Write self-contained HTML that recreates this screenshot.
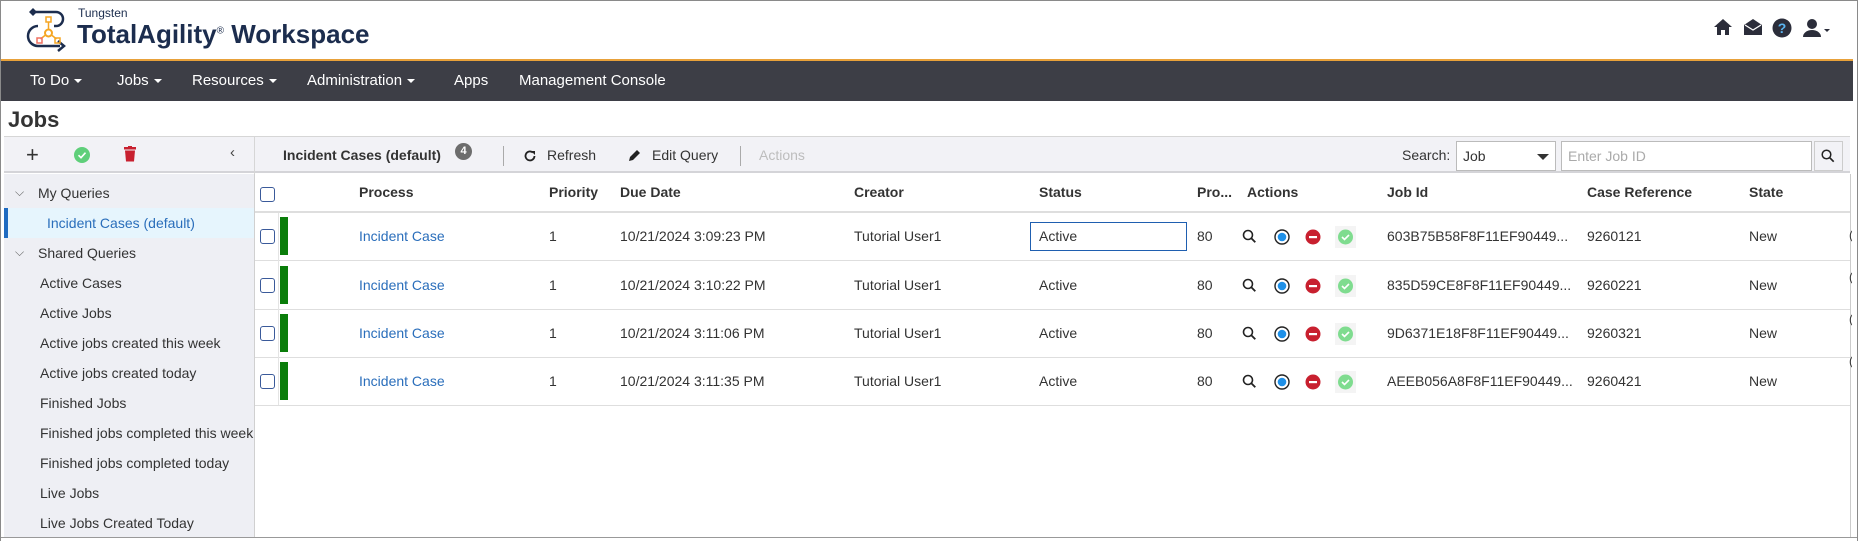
<!DOCTYPE html>
<html><head><meta charset="utf-8"><style>
*{margin:0;padding:0;box-sizing:border-box}
body{width:1858px;height:541px;overflow:hidden;background:#fff;font-family:"Liberation Sans",sans-serif;font-size:14px;color:#333;position:relative}
.a{position:absolute;white-space:nowrap}
.frame{position:absolute;left:0;top:0;width:1858px;height:541px;border:1px solid #8a8a8a;border-bottom:none;pointer-events:none}
.nav{position:absolute;left:1px;top:59px;width:1852px;height:42px;background:#3d3e46;border-top:2px solid #e8a13a}
.nav span{position:absolute;top:11px;color:#fff;font-size:15px}
.car{display:inline-block;width:0;height:0;border-left:4px solid transparent;border-right:4px solid transparent;border-top:4px solid #fff;margin-left:5px;vertical-align:middle}
.side{position:absolute;left:4px;top:174px;width:250px;height:367px;background:#eeeff4}
.tb{position:absolute;left:4px;top:136px;width:1846px;height:37px;background:#f2f2f6;border-top:1px solid #d6d6d6;border-bottom:2px solid #d4d4d8}
.si{position:absolute;left:40px;color:#333}
.hd{position:absolute;top:184px;font-weight:bold;color:#333}
.rl{position:absolute;left:255px;width:1595px;height:1px;background:#dedede}
.cb{position:absolute;left:260px;width:15px;height:15px;border:1.5px solid #3a5a9a;border-radius:3px;background:#fff}
.gb{position:absolute;left:280px;width:8px;height:38px;background:#0a7d0a}
</style></head><body>
<svg class="a" style="left:26px;top:6px" width="46" height="46" viewBox="0 0 46 46">
<path d="M8 6 H30 a7 7 0 0 1 0 14 H28" fill="none" stroke="#1c2d4e" stroke-width="2.5"/>
<path d="M3 6 l4 -4 l4 4 l-4 4z" fill="#1c2d4e"/>
<path d="M12 20 a10 10 0 0 0 0 20 H34" fill="none" stroke="#1c2d4e" stroke-width="2.5"/>
<path d="M32 35 l6 5 l-6 5" fill="none" stroke="#1c2d4e" stroke-width="2.5"/>
<rect x="20" y="11" width="5" height="5" fill="none" stroke="#f5a623" stroke-width="1.5"/>
<circle cx="22.5" cy="27" r="3.5" fill="none" stroke="#f5a623" stroke-width="2"/>
<path d="M22.5 16 v7 M19.5 29 l-5 4 M25.5 29 l5 4" stroke="#f5a623" stroke-width="1.5"/>
<rect x="11" y="32" width="5" height="5" fill="none" stroke="#f07060" stroke-width="1.5"/>
<rect x="29" y="32" width="5" height="5" fill="none" stroke="#f5a623" stroke-width="1.5"/>
</svg>
<div class="a" style="left:78px;top:6px;font-size:12px;color:#1c2d4e">Tungsten</div>
<div class="a" style="left:77px;top:19px;font-size:26px;color:#1c2d4e;font-weight:bold">TotalAgility<sup style="font-size:10px;font-weight:normal">®</sup> <span style="font-weight:600">Workspace</span></div>
<svg class="a" style="left:1713px;top:18px" width="20" height="18" viewBox="0 0 20 18"><path d="M10 1 L1 9 h3 v8 h4 v-5 h4 v5 h4 v-8 h3z" fill="#2b2d3a"/></svg>
<svg class="a" style="left:1743px;top:18px" width="20" height="18" viewBox="0 0 20 18"><path d="M1 7 L10 1 L19 7 V17 H1Z" fill="#2b2d3a"/><path d="M2 7 L10 12 L18 7" fill="none" stroke="#fff" stroke-width="1.3"/></svg>
<svg class="a" style="left:1772px;top:18px" width="20" height="20" viewBox="0 0 20 20"><circle cx="10" cy="10" r="9.5" fill="#2b2d3a"/><text x="10" y="15" font-size="14" font-weight="bold" text-anchor="middle" fill="#5ab4f0" font-family="Liberation Sans">?</text></svg>
<svg class="a" style="left:1803px;top:18px" width="28" height="20" viewBox="0 0 28 20"><circle cx="9" cy="6" r="5" fill="#2b2d3a"/><path d="M0 19 a9 7 0 0 1 18 0z" fill="#2b2d3a"/><path d="M21 11 h6 l-3 3z" fill="#2b2d3a"/></svg>
<div class="nav">
<span style="left:29px">To Do<i class="car"></i></span>
<span style="left:116px">Jobs<i class="car"></i></span>
<span style="left:191px">Resources<i class="car"></i></span>
<span style="left:306px">Administration<i class="car"></i></span>
<span style="left:453px">Apps</span>
<span style="left:518px">Management Console</span>
</div>
<div class="a" style="left:8px;top:107px;font-size:22px;font-weight:bold;color:#333">Jobs</div>
<div class="tb"></div>
<div class="a" style="left:254px;top:137px;width:1px;height:37px;background:#d6d6d6"></div>
<div class="a" style="left:26px;top:142px;font-size:22px;color:#333">+</div>
<svg class="a" style="left:74px;top:147px" width="16" height="16" viewBox="0 0 16 16"><circle cx="8" cy="8" r="8" fill="#5fcf7a"/><path d="M4.5 8.2 l2.5 2.5 l4.5 -5" fill="none" stroke="#fff" stroke-width="1.6"/></svg>
<svg class="a" style="left:124px;top:146px" width="12" height="16" viewBox="0 0 12 16"><rect x="0" y="1" width="12" height="2.5" fill="#c8202f"/><rect x="4" y="0" width="4" height="2" fill="#c8202f"/><path d="M1 4.5 h10 l-1 11 h-8z" fill="#c8202f"/></svg>
<div class="a" style="left:230px;top:144px;font-size:15px;color:#444">‹</div>
<div class="a" style="left:283px;top:147px;font-weight:bold">Incident Cases (default)</div>
<div class="a" style="left:455px;top:143px;width:17px;height:17px;border-radius:50%;background:#6d6d6d;color:#fff;font-size:11px;text-align:center;line-height:17px;font-weight:bold">4</div>
<div class="a" style="left:503px;top:146px;width:1px;height:20px;background:#aaa"></div>
<svg class="a" style="left:523px;top:149px" width="14" height="14" viewBox="0 0 14 14"><path d="M11.5 7 a4.5 4.5 0 1 1 -1.6 -3.5" fill="none" stroke="#222" stroke-width="1.8"/><path d="M8 2 h4 v4z" fill="#222"/></svg>
<div class="a" style="left:547px;top:147px">Refresh</div>
<svg class="a" style="left:627px;top:148px" width="15" height="15" viewBox="0 0 15 15"><path d="M2 13 l1 -4 l7 -7 l3 3 l-7 7z" fill="#222"/></svg>
<div class="a" style="left:652px;top:147px">Edit Query</div>
<div class="a" style="left:740px;top:146px;width:1px;height:20px;background:#aaa"></div>
<div class="a" style="left:759px;top:147px;color:#bdbdbd">Actions</div>
<div class="a" style="left:1402px;top:147px">Search:</div>
<div class="a" style="left:1456px;top:141px;width:100px;height:30px;border:1px solid #bbb;background:#fff"><span class="a" style="left:6px;top:6px">Job</span><span class="a" style="left:80px;top:12px;width:0;height:0;border-left:6px solid transparent;border-right:6px solid transparent;border-top:6px solid #333"></span></div>
<div class="a" style="left:1561px;top:141px;width:251px;height:30px;border:1px solid #bbb;background:#fff"><span class="a" style="left:6px;top:6px;color:#aaa">Enter Job ID</span></div>
<div class="a" style="left:1814px;top:141px;width:29px;height:30px;border:1px solid #ccc;background:#f2f2f6"></div>
<svg class="a" style="left:1821px;top:149px" width="14" height="14" viewBox="0 0 14 14"><circle cx="5.5" cy="5.5" r="4.3" fill="none" stroke="#222" stroke-width="1.5"/><path d="M8.7 8.7 l4 4" stroke="#222" stroke-width="1.7"/></svg>
<div class="side"></div>
<div class="a" style="left:4px;top:208px;width:250px;height:30px;background:#e6f5fd;border-left:4px solid #1f6bc1"></div>
<div class="a" style="left:15px;top:185px;font-size:12px;color:#666">⌵</div>
<div class="si" style="left:38px;top:185px">My Queries</div>
<div class="si" style="left:47px;top:215px;color:#2a6ebb">Incident Cases (default)</div>
<div class="a" style="left:15px;top:245px;font-size:12px;color:#666">⌵</div>
<div class="si" style="left:38px;top:245px">Shared Queries</div>
<div class="si" style="top:275px">Active Cases</div>
<div class="si" style="top:305px">Active Jobs</div>
<div class="si" style="top:335px">Active jobs created this week</div>
<div class="si" style="top:365px">Active jobs created today</div>
<div class="si" style="top:395px">Finished Jobs</div>
<div class="si" style="top:425px;width:214px;overflow:hidden">Finished jobs completed this week</div>
<div class="si" style="top:455px">Finished jobs completed today</div>
<div class="si" style="top:485px">Live Jobs</div>
<div class="si" style="top:515px">Live Jobs Created Today</div>
<div class="a" style="left:254px;top:174px;width:1px;height:367px;background:#d0d0d0"></div>
<div class="a" style="left:1850px;top:174px;width:1px;height:367px;background:#ccc"></div>
<div class="cb" style="top:187px"></div>
<div class="hd" style="left:359px">Process</div>
<div class="hd" style="left:549px">Priority</div>
<div class="hd" style="left:620px">Due Date</div>
<div class="hd" style="left:854px">Creator</div>
<div class="hd" style="left:1039px">Status</div>
<div class="hd" style="left:1197px">Pro...</div>
<div class="hd" style="left:1247px">Actions</div>
<div class="hd" style="left:1387px">Job Id</div>
<div class="hd" style="left:1587px">Case Reference</div>
<div class="hd" style="left:1749px">State</div>
<div class="rl" style="top:211px;height:2px"></div>
<div class="rl" style="top:260px"></div>
<div class="rl" style="top:309px"></div>
<div class="rl" style="top:357px"></div>
<div class="rl" style="top:405px"></div>
<div class="a" style="left:278px;top:213px;width:1px;height:192px;background:#e4e4e4"></div>
<div class="a" style="left:1030px;top:222px;width:157px;height:29px;border:1.5px solid #1f5fb0"></div>
<div class="cb" style="top:229px"></div><div class="gb" style="top:217px"></div>
<div class="a" style="left:359px;top:228px;color:#2a6ebb">Incident Case</div><div class="a" style="left:549px;top:228px">1</div><div class="a" style="left:620px;top:228px">10/21/2024 3:09:23 PM</div><div class="a" style="left:854px;top:228px">Tutorial User1</div><div class="a" style="left:1039px;top:228px">Active</div><div class="a" style="left:1197px;top:228px">80</div><div class="a" style="left:1387px;top:228px">603B75B58F8F11EF90449...</div><div class="a" style="left:1587px;top:228px">9260121</div><div class="a" style="left:1749px;top:228px">New</div>
<div class="cb" style="top:278px"></div><div class="gb" style="top:266px"></div>
<div class="a" style="left:359px;top:277px;color:#2a6ebb">Incident Case</div><div class="a" style="left:549px;top:277px">1</div><div class="a" style="left:620px;top:277px">10/21/2024 3:10:22 PM</div><div class="a" style="left:854px;top:277px">Tutorial User1</div><div class="a" style="left:1039px;top:277px">Active</div><div class="a" style="left:1197px;top:277px">80</div><div class="a" style="left:1387px;top:277px">835D59CE8F8F11EF90449...</div><div class="a" style="left:1587px;top:277px">9260221</div><div class="a" style="left:1749px;top:277px">New</div>
<div class="cb" style="top:326px"></div><div class="gb" style="top:314px"></div>
<div class="a" style="left:359px;top:325px;color:#2a6ebb">Incident Case</div><div class="a" style="left:549px;top:325px">1</div><div class="a" style="left:620px;top:325px">10/21/2024 3:11:06 PM</div><div class="a" style="left:854px;top:325px">Tutorial User1</div><div class="a" style="left:1039px;top:325px">Active</div><div class="a" style="left:1197px;top:325px">80</div><div class="a" style="left:1387px;top:325px">9D6371E18F8F11EF90449...</div><div class="a" style="left:1587px;top:325px">9260321</div><div class="a" style="left:1749px;top:325px">New</div>
<div class="cb" style="top:374px"></div><div class="gb" style="top:362px"></div>
<div class="a" style="left:359px;top:373px;color:#2a6ebb">Incident Case</div><div class="a" style="left:549px;top:373px">1</div><div class="a" style="left:620px;top:373px">10/21/2024 3:11:35 PM</div><div class="a" style="left:854px;top:373px">Tutorial User1</div><div class="a" style="left:1039px;top:373px">Active</div><div class="a" style="left:1197px;top:373px">80</div><div class="a" style="left:1387px;top:373px">AEEB056A8F8F11EF90449...</div><div class="a" style="left:1587px;top:373px">9260421</div><div class="a" style="left:1749px;top:373px">New</div>
<svg class="a" style="left:1240px;top:226px" width="120" height="170" viewBox="0 0 120 170">
<defs><g id="ai">
<circle cx="8" cy="8" r="4.5" fill="none" stroke="#222" stroke-width="1.6"/><path d="M11.3 11.3 l4 4" stroke="#222" stroke-width="1.8"/>
<circle cx="42" cy="10" r="7" fill="none" stroke="#222" stroke-width="1.4"/><circle cx="42" cy="10" r="4.3" fill="#1e90e8"/>
<circle cx="73" cy="10" r="7.5" fill="#c8202f"/><rect x="69" y="9" width="8" height="2.2" fill="#fff"/>
<rect x="95" y="-1" width="21" height="22" fill="#f4f4f4"/><circle cx="105.5" cy="10" r="7.5" fill="#7fdc8f"/><path d="M102 10 l2.5 2.5 l4.5 -4.5" fill="none" stroke="#fff" stroke-width="1.6"/>
</g></defs>
<use href="#ai" y="1"/><use href="#ai" y="50"/><use href="#ai" y="98"/><use href="#ai" y="146"/>
</svg>
<div class="a" style="left:1849px;top:228px;width:3px;height:160px;color:#333;font-size:12px;overflow:hidden">(<br><br><br>(<br><br><br>(<br><br><br>(</div>
<div class="a" style="left:0;top:537px;width:1858px;height:4px;border-top:1px solid #999;background:#fff"></div>
<div class="frame"></div>
</body></html>
